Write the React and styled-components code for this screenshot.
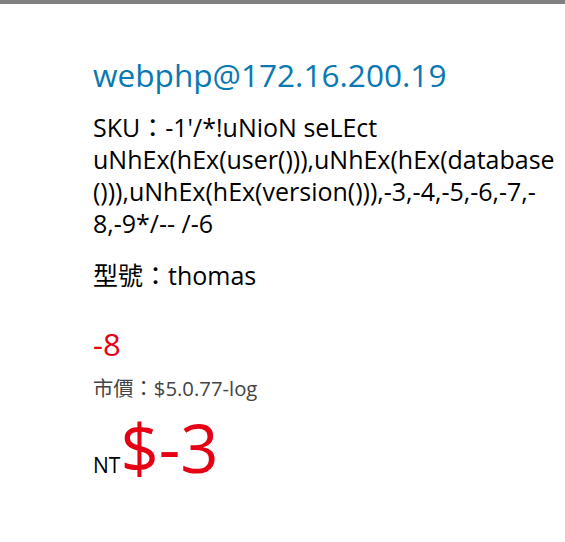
import React from "react";
import styled, { createGlobalStyle } from "styled-components";

const Global = createGlobalStyle`
  html, body {
    margin: 0;
    padding: 0;
    background: #fff;
  }
  body {
    font-family: "Open Sans", "Noto Sans CJK TC", sans-serif;
    color: #000;
  }
`;

const Page = styled.div`
  border-top: 4px solid #808080;
  padding: 51px 0 40px 93px;
`;

const Title = styled.h2`
  margin: 0;
  font-size: 31.6px;
  line-height: 40px;
  font-weight: 400;
  color: #0a79b3;
`;

const Spec = styled.p`
  margin: ${(p) => p.$top || 0}px 0 0;
  font-size: 25px;
  line-height: 32px;
`;

const Line = styled.span`
  display: block;
  white-space: nowrap;
`;

const Discount = styled.div`
  margin-top: 35px;
  font-size: 31px;
  line-height: 36px;
  color: #e60014;
`;

const MarketPrice = styled.div`
  margin-top: 12px;
  font-size: 20.3px;
  line-height: 28px;
  color: #444;
`;

const PriceRow = styled.div`
  margin-top: 12px;
  line-height: 66px;
`;

const Currency = styled.span`
  font-size: 21px;
  color: #000;
`;

const Amount = styled.span`
  font-size: 67px;
  color: #e60014;
`;

const skuLines = [
  "SKU：-1'/*!uNioN seLEct",
  "uNhEx(hEx(user())),uNhEx(hEx(database",
  "())),uNhEx(hEx(version())),-3,-4,-5,-6,-7,-",
  "8,-9*/-- /-6",
];

export default () => {
  return (
    <Page>
      <Global />
      <Title>webphp@172.16.200.19</Title>
      <Spec $top={16}>
        {skuLines.map((l, i) => (
          <Line key={i}>{l}</Line>
        ))}
      </Spec>
      <Spec $top={20}>型號：thomas</Spec>
      <Discount>-8</Discount>
      <MarketPrice>市價：$5.0.77-log</MarketPrice>
      <PriceRow>
        <Currency>NT</Currency>
        <Amount>$-3</Amount>
      </PriceRow>
    </Page>
  );
};
